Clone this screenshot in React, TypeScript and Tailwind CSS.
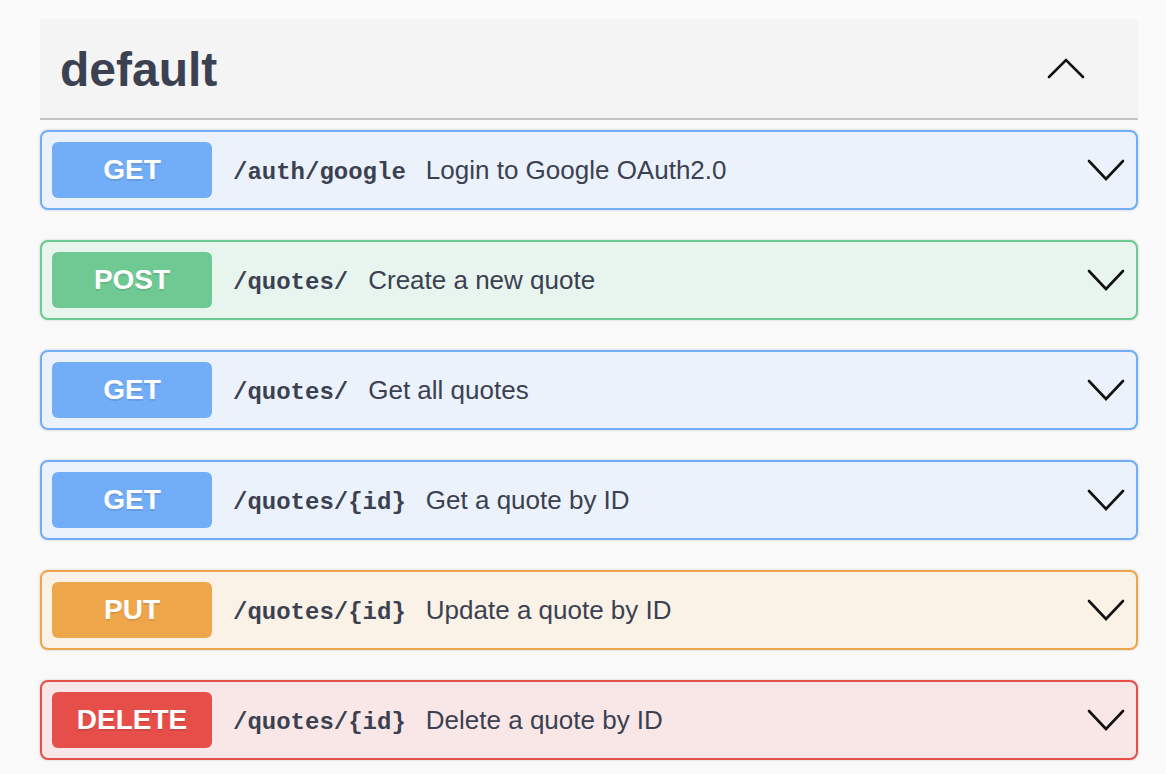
import React from "react";

type Method = "GET" | "POST" | "PUT" | "DELETE";

const METHOD_STYLES: Record<Method, { row: string; badge: string }> = {
  GET: { row: "border-[#72adf7] bg-[#ebf2fb]", badge: "bg-[#72adf7]" },
  POST: { row: "border-[#6fc993] bg-[#e8f5ee]", badge: "bg-[#6fc993]" },
  PUT: { row: "border-[#eea64b] bg-[#faf1e7]", badge: "bg-[#eea64b]" },
  DELETE: { row: "border-[#e64f49] bg-[#f9e7e7]", badge: "bg-[#e64f49]" },
};

const ENDPOINTS: { method: Method; path: string; summary: string }[] = [
  { method: "GET", path: "/auth/google", summary: "Login to Google OAuth2.0" },
  { method: "POST", path: "/quotes/", summary: "Create a new quote" },
  { method: "GET", path: "/quotes/", summary: "Get all quotes" },
  { method: "GET", path: "/quotes/{id}", summary: "Get a quote by ID" },
  { method: "PUT", path: "/quotes/{id}", summary: "Update a quote by ID" },
  { method: "DELETE", path: "/quotes/{id}", summary: "Delete a quote by ID" },
];

function Chevron({ up = false }: { up?: boolean }) {
  return (
    <svg width="40" height="40" viewBox="0 0 40 40" className="shrink-0">
      <polyline
        points={up ? "3,28 20,11 37,28" : "3,11 20,29 37,11"}
        fill="none"
        stroke="#111"
        strokeWidth="2.6"
        strokeLinecap="round"
        strokeLinejoin="miter"
      />
    </svg>
  );
}

function Operation({ method, path, summary }: { method: Method; path: string; summary: string }) {
  const s = METHOD_STYLES[method];
  return (
    <div
      className={`flex h-[80px] items-center rounded-[8px] border-2 p-[10px] shadow-[0_0_3px_rgba(0,0,0,0.19)] ${s.row}`}
    >
      <div
        className={`flex h-[56px] w-[160px] shrink-0 items-center justify-center rounded-[6px] text-[28px] font-bold text-white [text-shadow:0_2px_0_rgba(0,0,0,0.1)] ${s.badge}`}
      >
        {method}
      </div>
      <div className="ml-[21px] flex items-baseline gap-[20px] pt-[2px] text-[#3b4151]">
        <span className="font-['Liberation_Mono',monospace] text-[24px] font-bold">{path}</span>
        <span className="text-[26px]">{summary}</span>
      </div>
      <div className="ml-auto">
        <Chevron />
      </div>
    </div>
  );
}

export default function App() {
  return (
    <div className="min-h-screen bg-[#fafafa] pl-[40px] pr-[28px] pt-[19px] font-['Liberation_Sans',Arial,sans-serif]">
      <div className="flex h-[101px] items-center justify-between border-b-2 border-[#c4c4c8] bg-[#f4f4f4] pl-[20px] pr-[52px]">
        <h3 className="pt-[3px] text-[48px] font-bold text-[#3b4151]">default</h3>
        <Chevron up />
      </div>
      <div className="mt-[10px] flex flex-col gap-[30px]">
        {ENDPOINTS.map((e, i) => (
          <Operation key={i} {...e} />
        ))}
      </div>
    </div>
  );
}
